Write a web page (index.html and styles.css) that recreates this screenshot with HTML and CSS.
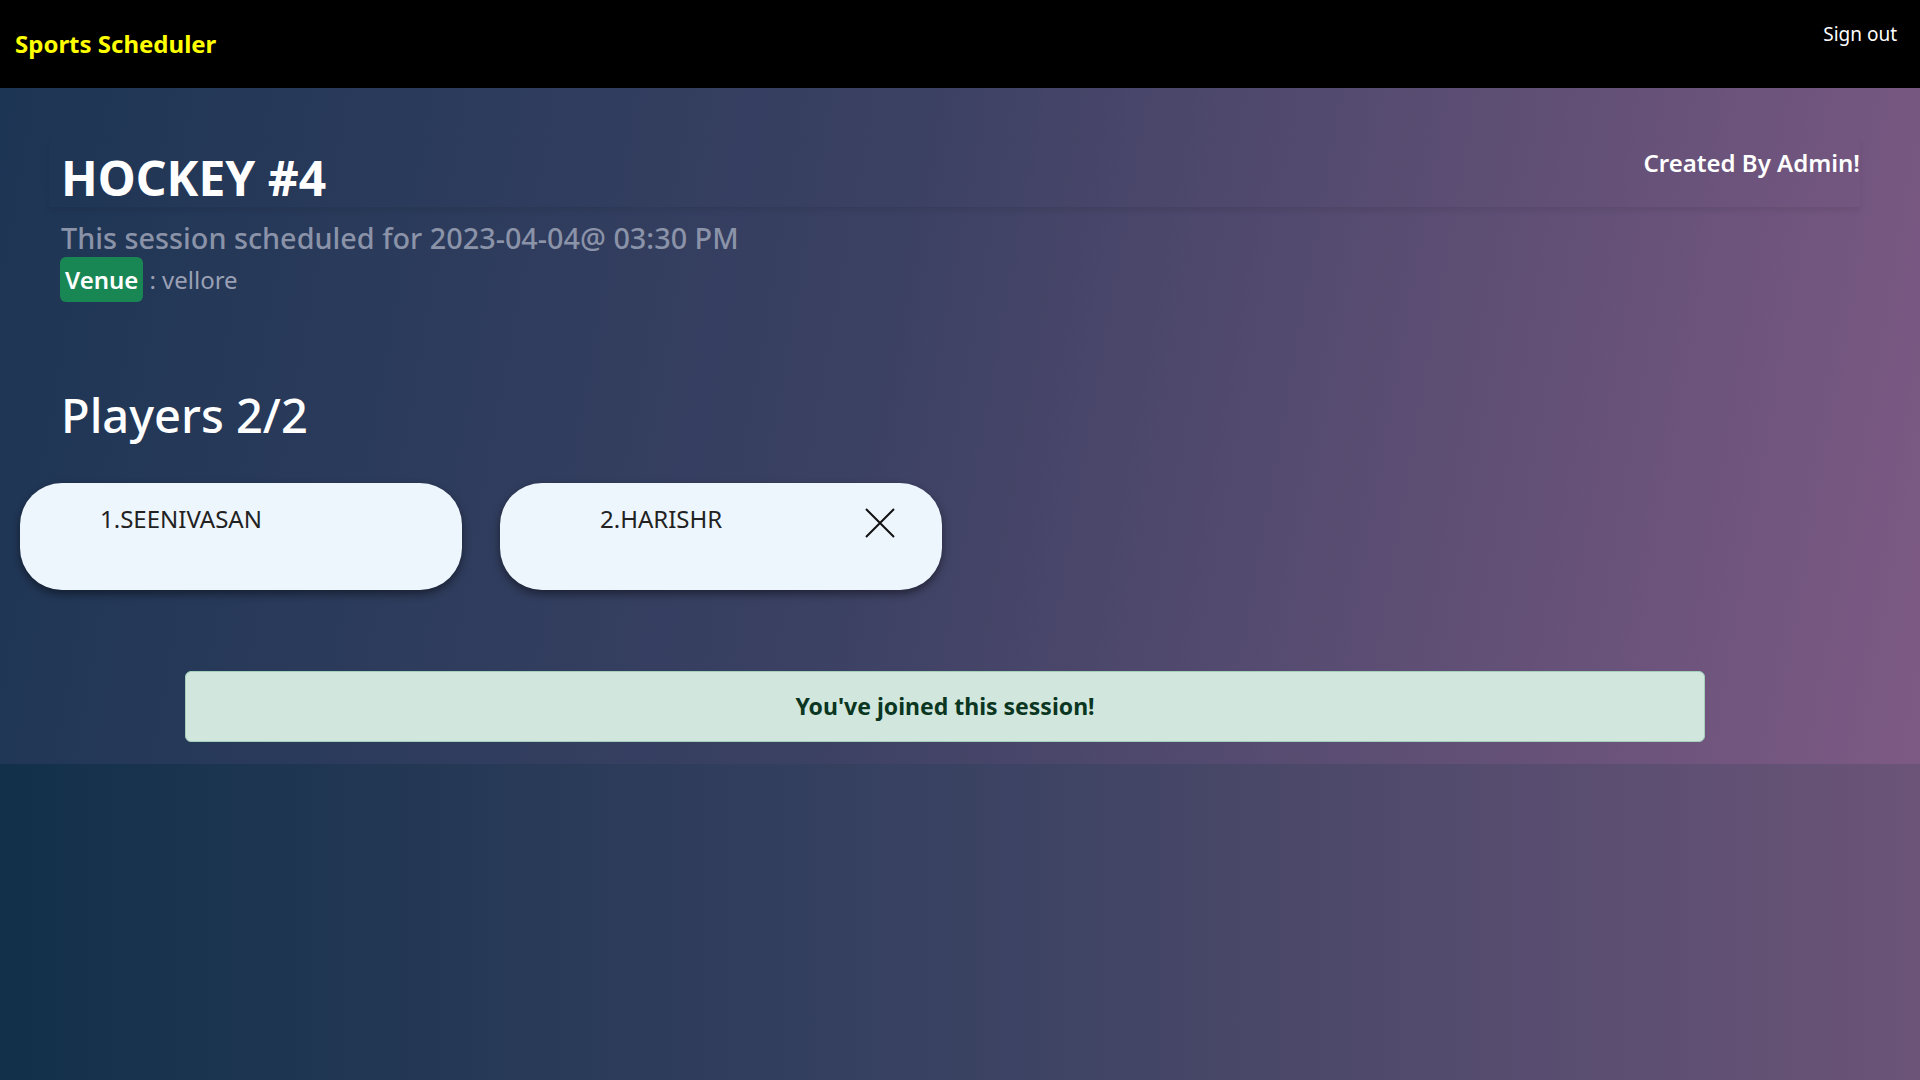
FILE: index.html
```html
<!DOCTYPE html>
<html lang="en">
<head>
<meta charset="utf-8">
<title>Sports Scheduler</title>
<link rel="stylesheet" href="styles.css">
</head>
<body>
<nav class="navbar">
  <a class="brand" href="#">Sports Scheduler</a>
  <a class="signout" href="#">Sign out</a>
</nav>
<main class="session">
  <div class="head-row">
    <h1 class="title">HOCKEY #4</h1>
    <div class="creator">Created By Admin!</div>
  </div>
  <p class="when">This session scheduled for 2023-04-04@ 03:30 PM</p>
  <p class="venue"><span class="badge">Venue</span> : vellore</p>
  <h2 class="players-title">Players 2/2</h2>
  <div class="players">
    <div class="player-card"><span class="player-name">1.SEENIVASAN</span></div>
    <div class="player-card"><span class="player-name">2.HARISHR</span>
      <svg class="remove" viewBox="0 0 32 32" width="32" height="32"><path d="M2 2 L30 30 M30 2 L2 30" stroke="#111" stroke-width="2" fill="none"/></svg>
    </div>
  </div>
  <div class="alert">You've joined this session!</div>
</main>
</body>
</html>
```
FILE: styles.css
```css
html, body {
  margin: 0;
  padding: 0;
}
body {
  min-height: 1080px;
  font-family: "Noto Sans", "Open Sans", sans-serif;
  background: linear-gradient(to right, #12304a 0%, #3a4262 50%, #6b5478 100%);
  color: #fff;
}
a { text-decoration: none; }
.navbar {
  height: 88px;
  background: #000;
  display: flex;
  justify-content: space-between;
  align-items: flex-start;
  padding: 0 23px 0 15px;
}
.brand {
  color: #ffff00;
  font-weight: 700;
  font-size: 24px;
  margin-top: 27px;
}
.signout {
  color: #fff;
  font-size: 19px;
  margin-top: 21px;
}
.session {
  background: linear-gradient(100deg, #1d3554 0%, #3b4163 45%, #7d5a84 100%);
  padding: 50px 60px 20px 61px;
  height: 676px;
  box-sizing: border-box;
}
.head-row {
  display: flex;
  justify-content: space-between;
  align-items: flex-start;
  box-shadow: 0 4px 6px rgba(0,0,0,0.08);
  margin-left: -12px;
  padding-left: 12px;
  height: 69px;
}
.title {
  margin: 0;
  font-size: 48px;
  font-weight: 700;
  line-height: 1;
  padding-top: 16px;
}
.creator {
  font-size: 24px;
  font-weight: 600;
  padding-top: 8px;
}
.when {
  margin: 14px 0 0;
  font-size: 28.8px;
  color: #8b93a8;
  line-height: 1.2;
  font-weight: 500;
}
.venue {
  margin: 1px 0 0 -1px;
  font-size: 24px;
  color: #9aa0b4;
  display: flex;
  align-items: center;
  gap: 6px;
}
.badge {
  background: #198754;
  color: #fff;
  font-weight: 600;
  padding: 6px 5px;
  border-radius: 6px;
  font-size: 24px;
}
.players-title {
  margin: 85px 0 0;
  font-size: 47px;
  font-weight: 500;
  line-height: 1.2;
}
.players {
  display: flex;
  gap: 38px;
  margin: 40px 0 0 -41px;
}
.player-card {
  width: 442px;
  height: 107px;
  background: #eef6fd;
  border-radius: 42px;
  box-shadow: 0 4px 8px rgba(0,0,0,0.45);
  box-sizing: border-box;
  display: flex;
  align-items: flex-start;
  justify-content: space-between;
  padding: 19px 46px 0 80px;
  color: #222;
}
.player-card + .player-card {
  padding-left: 100px;
}
.player-name {
  font-size: 24px;
}
.remove {
  margin-top: 5px;
}
.alert {
  margin: 81px 0 0 124px;
  width: 1520px;
  height: 71px;
  box-sizing: border-box;
  background: #d1e7dd;
  border: 1px solid #a3cfbb;
  border-radius: 6px;
  color: #0a3622;
  font-weight: 700;
  font-size: 23px;
  display: flex;
  align-items: center;
  justify-content: center;
}
```
